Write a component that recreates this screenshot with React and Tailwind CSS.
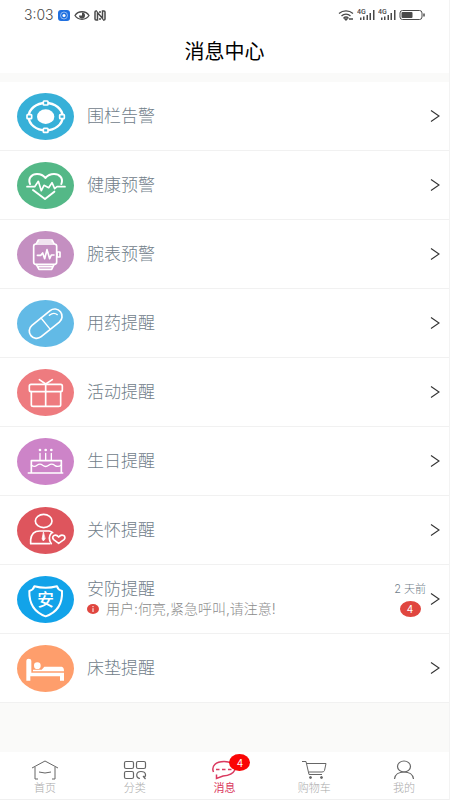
import { clsx } from 'clsx';

const reminders = [
  { id: 'fence', title: '围栏告警', color: 'text-[#37b0d8]', icon: FenceIcon },
  { id: 'health', title: '健康预警', color: 'text-[#54b887]', icon: HealthIcon },
  { id: 'watch', title: '腕表预警', color: 'text-[#c48fc1]', icon: WatchIcon },
  { id: 'medicine', title: '用药提醒', color: 'text-[#62bae6]', icon: PillIcon },
  { id: 'activity', title: '活动提醒', color: 'text-[#ee7b7f]', icon: GiftIcon },
  { id: 'birthday', title: '生日提醒', color: 'text-[#cd84c8]', icon: CakeIcon },
  { id: 'care', title: '关怀提醒', color: 'text-[#de555d]', icon: CareIcon },
  {
    id: 'security',
    title: '安防提醒',
    color: 'text-[#12a3e9]',
    icon: ShieldIcon,
    message: '用户:何亮,紧急呼叫,请注意!',
    time: '2 天前',
    unread: 4,
  },
  { id: 'mattress', title: '床垫提醒', color: 'text-[#fe9e6c]', icon: BedIcon },
];

const tabs = [
  { id: 'home', label: '首页', icon: HomeTabIcon },
  { id: 'category', label: '分类', icon: CategoryTabIcon },
  { id: 'message', label: '消息', icon: MessageTabIcon, active: true, badge: 4 },
  { id: 'cart', label: '购物车', icon: CartTabIcon },
  { id: 'mine', label: '我的', icon: MineTabIcon },
];

function FenceIcon() {
  return (
    <g>
      <ellipse cx="86" cy="71" rx="51" ry="41" strokeWidth="7" />
      <ellipse cx="86" cy="71" rx="26" ry="22" fill="white" stroke="none" />
      <g fill="currentColor" strokeWidth="5">
        <rect x="79" y="24" width="14" height="12" rx="2" />
        <rect x="79" y="106" width="14" height="12" rx="2" />
        <rect x="30" y="65" width="14" height="12" rx="2" />
        <rect x="128" y="65" width="14" height="12" rx="2" />
      </g>
    </g>
  );
}

function HealthIcon() {
  return (
    <g strokeWidth="6">
      <path d="M39 66C32 48 45 36 60 36C72 36 80 41 85 48C91 41 99 36 111 36C127 36 140 48 133 66" />
      <path d="M48 84L84 111L112 89" />
      <path d="M30 74H53L64 58L73 86L81 70L95 77L105 62L113 80L120 74H144" strokeWidth="5" />
    </g>
  );
}

function WatchIcon() {
  return (
    <g strokeWidth="5">
      <rect x="50" y="39" width="69" height="61" rx="7" />
      <path d="M58 38L64 27H105L111 38M58 101L66 115H104L111 101M64 107H106M63 33H107" />
      <rect x="120" y="63" width="9" height="15" rx="1" />
      <path d="M61 73H71L77 66L83 83L90 56L98 83L103 72H111" />
    </g>
  );
}

function PillIcon() {
  return (
    <g strokeWidth="5">
      <g transform="rotate(-39 86 71)">
        <rect x="29" y="49" width="114" height="44" rx="22" />
        <path d="M86 49V93" strokeWidth="4" />
      </g>
      <path d="M97 46Q110 35 121 44" strokeWidth="4" />
    </g>
  );
}

function GiftIcon() {
  return (
    <g strokeWidth="5">
      <rect x="37" y="46" width="99" height="22" rx="5" />
      <path d="M43 68V107Q43 112 49 112H125Q131 112 131 107V68M86 46V112M67 32L86 45L106 32" />
    </g>
  );
}

function CakeIcon() {
  return (
    <g strokeWidth="5">
      <path d="M43 105V68H133V105M34 105H137" />
      <path d="M69 46V66M86 46V66M103 46V66" strokeWidth="4" />
      <path d="M43 81Q52 89 60 82Q69 75 77 82Q86 89 95 82Q104 75 113 82Q123 89 133 81" strokeWidth="4" />
      <g fill="white" stroke="none">
        <circle cx="69" cy="36" r="4" />
        <circle cx="86" cy="36" r="4" />
        <circle cx="103" cy="36" r="4" />
      </g>
    </g>
  );
}

function CareIcon() {
  return (
    <g strokeWidth="5">
      <ellipse cx="80" cy="42" rx="25" ry="20" />
      <path d="M98 110H41V98C43 80 54 72 68 72H96Q103 73 107 77" />
      <path d="M103 78Q91 93 103 110" />
      <path d="M79 76L75 96L79 102L84 96Z" fill="white" strokeWidth="2" />
      <path d="M125 109L110 98C101 88 115 78 125 90C135 78 150 88 141 98Z" />
    </g>
  );
}

function ShieldIcon() {
  return (
    <g strokeWidth="6">
      <path d="M52 31Q49 42 37 45C36 84 52 109 86 121C120 109 137 84 135 45Q123 42 120 31Q86 40 52 31Z" />
      <text
        x="86"
        y="90"
        fontSize="50"
        fontWeight="500"
        fontFamily="Noto Sans CJK SC, sans-serif"
        textAnchor="middle"
        fill="white"
        stroke="none"
      >
        安
      </text>
    </g>
  );
}

function BedIcon() {
  return (
    <g fill="white" stroke="none">
      <path d="M28 47Q28 41 35 41Q43 41 43 47V83H141V107H129V94H40V107H28Z" />
      <circle cx="61" cy="62" r="10" />
      <path d="M48 74H74L82 65H134Q141 66 141 79H48Z" />
    </g>
  );
}

function HomeTabIcon() {
  return (
    <svg viewBox="0 0 28 20" className="h-5 w-7" fill="none" stroke="currentColor">
      <path d="M1 8L14 1L27 8M4 7V19H7M24 7V19H21M8 12Q14 14 20 12" />
    </svg>
  );
}

function CategoryTabIcon() {
  return (
    <svg viewBox="0 0 24 20" className="h-5 w-6" fill="none" stroke="currentColor" strokeWidth="1.2">
      <rect x="1.5" y="1.5" width="9" height="7" rx="1.5" />
      <rect x="13.5" y="1.5" width="9" height="7" rx="1.5" />
      <rect x="1.5" y="11.5" width="9" height="7" rx="1.5" />
      <path d="M17 18.5C12.5 18 12.5 11.5 18 11.5C23.5 11.5 23.5 16.5 20.5 17.5M20 16L22.5 19" />
    </svg>
  );
}

function MessageTabIcon() {
  return (
    <svg viewBox="0 0 26 20" className="h-5 w-[26px]" fill="none" stroke="currentColor" strokeWidth="1.5">
      <path d="M2.500 12C0 6 5 1.500 13 1.500C21 1.500 25.500 6 23.500 10.500C22 14 17 15.500 12 16L5.500 18.500V14.500" />
      <path d="M5 9.500H8.500M11 9.500H14.500M17 9.500H20.500" />
    </svg>
  );
}

function CartTabIcon() {
  return (
    <svg viewBox="0 0 26 20" className="h-5 w-[26px]" fill="none" stroke="currentColor">
      <path d="M1 1.5H5L8 14.5H21M6 3.5H25L23.5 10.5Q23 12 21 12H8" />
      <circle cx="9.5" cy="17.5" r="1" fill="currentColor" />
      <circle cx="20.5" cy="17.5" r="1" fill="currentColor" />
    </svg>
  );
}

function MineTabIcon() {
  return (
    <svg viewBox="0 0 22 20" className="h-5 w-[22px]" fill="none" stroke="currentColor" strokeWidth="1.2">
      <ellipse cx="11" cy="6.5" rx="6.5" ry="5.5" />
      <path d="M1.5 19C2 14.5 6 12 11 12C16 12 20 14.5 20.5 19" />
    </svg>
  );
}

function Signal() {
  return (
    <svg viewBox="0 0 18 12" className="h-3 w-[18px]" fill="currentColor">
      <text x="0" y="5" fontSize="7" fontWeight="500" fontFamily="Roboto, sans-serif">4G</text>
      <path d="M3 8.5h1.5v2.5H3zM6 7.5h1.5v3.5H6zM9.5 6h1.5v5H9.5zM12.5 4h1.5v7H12.5zM16 1h1.5v10H16z" />
    </svg>
  );
}

function StatusBar() {
  return (
    <div className="flex h-[30px] items-center justify-between px-6 text-[#4a4a4a]">
      <div className="flex items-center gap-1">
        <span className="font-[Inter] text-sm font-light">3:03</span>
        <svg viewBox="0 0 12 11" className="h-[11px] w-3" fill="none" stroke="white">
          <rect width="12" height="11" rx="3" fill="#2070e0" stroke="none" />
          <circle cx="6" cy="5.5" r="3.5" strokeWidth="0.7" opacity="0.7" />
          <circle cx="6" cy="5.5" r="1.5" fill="white" stroke="none" />
        </svg>
        <svg viewBox="0 0 16 11" className="h-[11px] w-4" fill="none" stroke="currentColor" strokeWidth="1.3">
          <path d="M1 5.5C4 0.5 12 0.5 15 5.5C12 10.5 4 10.5 1 5.5Z" />
          <path d="M8 2.5A3 3 0 1 1 5 5.5H8Z" fill="currentColor" stroke="none" />
        </svg>
        <svg viewBox="0 0 12 11" className="h-[11px] w-3" fill="none" stroke="currentColor" strokeWidth="1.5">
          <path d="M3 1H2Q1 1 1 2V9Q1 10 2 10H3.5V2.5L8.5 8.5V1H10Q11 1 11 2V9Q11 10 10 10H9M6 1V3M6 8V10" />
        </svg>
      </div>
      <div className="flex items-center gap-[3px]">
        <svg viewBox="0 0 16 12" className="h-3 w-4" fill="none" stroke="currentColor" strokeWidth="1.3">
          <path d="M1 4.5C5 1 11 1 15 4.5M3.5 7C6 4.5 10 4.5 12.5 7M5.5 9.2C7 7.8 9 7.8 10.5 9.2" />
          <path d="M7 10L8 11L9 10ZM11 10H15" />
        </svg>
        <Signal />
        <Signal />
        <svg viewBox="0 0 26 12" className="h-3 w-[26px]" fill="none" stroke="currentColor">
          <rect x="1" y="1.5" width="22" height="9" rx="2.5" />
          <rect x="2.5" y="3" width="11" height="6" rx="1" fill="currentColor" stroke="none" />
          <path d="M25 4.5V7.5" strokeWidth="1.5" />
        </svg>
      </div>
    </div>
  );
}

function ReminderRow({ item }) {
  const Icon = item.icon;

  return (
    <li className="border-b border-[#f1f1f1]">
      <a href={`#${item.id}`} className="flex h-[68px] items-center pl-[17px] pr-[9px]">
        <svg
          viewBox="0 0 171 141"
          className={clsx('h-[47px] w-[57px] shrink-0', item.color)}
          fill="none"
          stroke="white"
          strokeLinecap="round"
          strokeLinejoin="round"
        >
          <ellipse cx="85.5" cy="70.5" rx="85.5" ry="70.5" fill="currentColor" stroke="none" />
          <Icon />
        </svg>

        <div className="ml-[13px] min-w-0 flex-1">
          <h2 className="truncate text-[17px] leading-5 font-light text-[#71808a]">{item.title}</h2>
          {item.message && (
            <p className="flex items-center gap-[7px] text-sm leading-5 font-light text-[#8c8c8c]">
              <svg viewBox="0 0 12 10" className="h-[10px] w-3 shrink-0">
                <ellipse cx="6" cy="5" rx="6" ry="5" fill="#e0463f" />
                <path d="M6 4.2V8M6 2V3.2" stroke="white" />
              </svg>
              <span className="truncate">{item.message}</span>
            </p>
          )}
        </div>

        {item.unread && (
          <div className="flex shrink-0 flex-col items-center gap-1">
            <span className="text-[11px] leading-4 font-light text-[#71808a]">{item.time}</span>
            <span className="flex h-4 w-[21px] items-center justify-center rounded-[50%] bg-[#e0463f] text-[10px] leading-4 text-white">
              {item.unread}
            </span>
          </div>
        )}

        <svg viewBox="0 0 10 14" className="ml-1 h-[14px] w-[10px] shrink-0" fill="none" stroke="#333" strokeWidth="1.1">
          <path d="M1 1.5L9 7L1 12.5" />
        </svg>
      </a>
    </li>
  );
}

function TabBar() {
  return (
    <nav className="sticky bottom-0 flex h-12 border-b border-[#f0f0f0] bg-white">
      {tabs.map((tab) => {
        const Icon = tab.icon;
        return (
          <a
            key={tab.id}
            href={`#${tab.id}`}
            className={clsx(
              'flex flex-1 flex-col items-center pt-2',
              tab.active ? 'text-[#da3a60]' : 'text-[#666]'
            )}
          >
            <span className="relative">
              <Icon />
              {tab.badge && (
                <span className="absolute -top-1.5 left-[18px] flex h-[17px] w-[21px] items-center justify-center rounded-[50%] bg-[#fa0505] text-[10px] leading-4 text-white">
                  {tab.badge}
                </span>
              )}
            </span>
            <span className={clsx('text-[11px] leading-4', !tab.active && 'font-light text-[#aaa]')}>
              {tab.label}
            </span>
          </a>
        );
      })}
    </nav>
  );
}

export default function App() {
  return (
    <div className="flex min-h-screen flex-col border-r border-[#f3f3f3] bg-[#fafaf9] font-['Inter','Noto_Sans_CJK_SC',sans-serif]">
      <header className="bg-white">
        <StatusBar />
        <h1 className="flex h-[43px] items-center justify-center text-xl text-black">消息中心</h1>
      </header>

      <main className="flex-1 pt-[9px]">
        <ul className="bg-white">
          {reminders.map((item) => (
            <ReminderRow key={item.id} item={item} />
          ))}
        </ul>
      </main>

      <TabBar />
    </div>
  );
}
